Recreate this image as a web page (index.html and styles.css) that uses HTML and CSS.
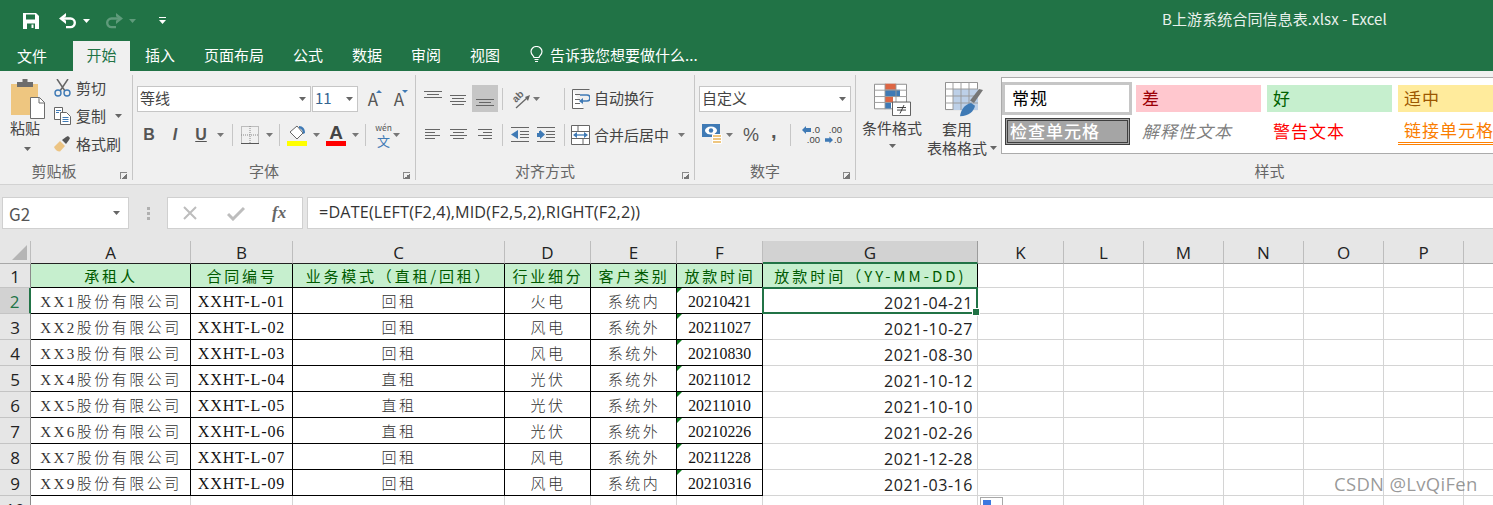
FILE: index.html
```html
<!DOCTYPE html>
<html lang="zh">
<head>
<meta charset="utf-8">
<title>B上游系统合同信息表.xlsx - Excel</title>
<link rel="stylesheet" href="styles.css">
</head>
<body>
<header class="titlebar">
  <div class="qat">
    <svg class="save" width="16" height="16" viewBox="0 0 16 16"><path fill="#fff" d="M0 0h13l3 3v13H0z"/><path fill="#217346" d="M3 1.500h9v5H3zM4 10.500h8V16H4z"/><path fill="#fff" d="M8.500 11.500h2V15h-2z"/></svg>
    <svg class="undo" width="18" height="16" viewBox="0 0 18 16"><path fill="none" stroke="#fff" stroke-width="2.400" d="M3 5.500h8.500a4.300 4.300 0 0 1 0 8.600H7"/><path fill="#fff" d="M7 0v3.200L4.200 5.500 7 7.800V11L0 5.500z"/></svg>
    <svg class="caret-s" width="7" height="4" viewBox="0 0 7 4"><path fill="#fff" d="M0 0h7L3.500 4z"/></svg>
    <svg class="redo" width="18" height="16" viewBox="0 0 18 16"><path fill="none" stroke="#5f9b7b" stroke-width="2.400" d="M15 5.500H6.500a4.300 4.300 0 0 0 0 8.600H11"/><path fill="#5f9b7b" d="M11 0v3.200l2.800 2.300L11 7.800V11l7-5.500z"/></svg>
    <svg class="caret-s2" width="7" height="4" viewBox="0 0 7 4"><path fill="#5f9b7b" d="M0 0h7L3.500 4z"/></svg>
    <svg class="custom" width="7" height="7" viewBox="0 0 7 7"><path fill="#fff" d="M0 0h7v1H0zM0 3h7L3.500 7z"/></svg>
  </div>
  <div class="doc-title">B上游系统合同信息表.xlsx - Excel</div>
</header>
<nav class="tabs">
  <span class="tab t-file">文件</span>
  <span class="tab active">开始</span>
  <span class="tab t-ins">插入</span>
  <span class="tab t-page">页面布局</span>
  <span class="tab t-std">公式</span>
  <span class="tab t-std">数据</span>
  <span class="tab t-std">审阅</span>
  <span class="tab t-std">视图</span>
  <svg class="bulb" width="13" height="17" viewBox="0 0 13 17"><path fill="none" stroke="#fff" stroke-width="1.200" d="M4 11.500C3.500 9.500 1 8.500 1 5.500a5.500 5 0 0 1 11 0c0 3-2.500 4-3 6z"/><path stroke="#fff" stroke-width="1.200" d="M4.500 13.500h4M5 15.500h3"/></svg>
  <span class="tab t-tell">告诉我您想要做什么...</span>
</nav>

<section class="ribbon">
  <div class="group g-clip">
    <div class="clip-body">
      <div class="paste">
        <svg width="34" height="40" viewBox="0 0 34 40"><rect x="0" y="5" width="27" height="31" fill="#eec680"/><path fill="#6d6d6d" d="M6 3h5.500V0h5v3H22v5H6z"/><path fill="#fff" stroke="#6d6d6d" d="M19.500 18.500h9l5 5v16h-14z"/><path fill="none" stroke="#6d6d6d" d="M28 18.500v5.500h5.500"/></svg>
        <span class="paste-t">粘贴</span>
        <svg class="paste-c" width="7" height="4" viewBox="0 0 7 4"><path fill="#666" d="M0 0h7L3.500 4z"/></svg>
      </div>
      <div class="clip-list">
        <div class="clip-item">
          <svg width="17" height="18" viewBox="0 0 17 18"><path stroke="#666" stroke-width="1.500" d="M3 0l8 12M14 0L6 12"/><circle cx="4" cy="14" r="3" fill="none" stroke="#3f7ab5" stroke-width="1.400"/><circle cx="13" cy="14" r="3" fill="none" stroke="#3f7ab5" stroke-width="1.400"/></svg>
          <span>剪切</span>
        </div>
        <div class="clip-item">
          <svg width="17" height="18" viewBox="0 0 17 18"><path fill="#fff" stroke="#666" d="M.5.500h8v12h-8z"/><path fill="#fff" stroke="#666" d="M6.500 5.500h6l4 4v8h-10z"/><path stroke="#3f7ab5" d="M8.500 10.500h6M8.500 12.500h6M8.500 14.500h6M2 3.500h5M2 5.500h3"/></svg>
          <span>复制</span>
          <svg class="clip-c" width="7" height="4" viewBox="0 0 7 4"><path fill="#666" d="M0 0h7L3.500 4z"/></svg>
        </div>
        <div class="clip-item">
          <svg width="17" height="16" viewBox="0 0 17 16"><path fill="#ecc483" d="M0 11l6-6 5 5-5 5.500c-3 0-5-2-6-4.500z"/><path fill="#555" d="M8 4l4-3 2-1 2 2-1 2-3 4z"/></svg>
          <span>格式刷</span>
        </div>
      </div>
    </div>
    <div class="label lb-clip">剪贴板</div>
    <i class="launch"></i>
  </div>

  <div class="group g-font">
    <div class="row r1">
      <div class="field f-name"><span>等线</span><svg width="7" height="4" viewBox="0 0 7 4"><path fill="#666" d="M0 0h7L3.500 4z"/></svg></div>
      <div class="field f-size"><span class="blue">11</span><svg width="7" height="4" viewBox="0 0 7 4"><path fill="#666" d="M0 0h7L3.500 4z"/></svg></div>
      <span class="grow ml8">A<i class="up"></i></span>
      <span class="grow ml12">A<i class="down"></i></span>
    </div>
    <div class="row r2">
      <span class="fmt w-b">B</span><span class="fmt w-i">I</span><span class="fmt w-u">U</span>
      <svg class="cw14" width="7" height="4" viewBox="0 0 7 4"><path fill="#777" d="M0 0h7L3.500 4z"/></svg>
      <i class="sep ml5"></i>
      <svg class="ml8" width="18" height="18" viewBox="0 0 18 18"><path fill="none" stroke="#888" stroke-dasharray="1 1" d="M.5.500h17v17H.500zM9 0v18M0 9h18"/><path stroke="#555" d="M0 17.500h18"/></svg>
      <svg class="cw20" width="7" height="4" viewBox="0 0 7 4"><path fill="#777" d="M0 0h7L3.500 4z"/></svg>
      <i class="sep"></i>
      <svg class="ml7" width="20" height="22" viewBox="0 0 20 22"><path fill="#fff" stroke="#666" d="M3 8l7-6 6 7-6 6z"/><path fill="#3f7ab5" d="M12 2c4 0 6 3 6 7l-2 1c0-3-1-5-4-6z"/><path fill="#ffff00" d="M0 17h20v5H0z"/></svg>
      <svg class="cw18" width="7" height="4" viewBox="0 0 7 4"><path fill="#777" d="M0 0h7L3.500 4z"/></svg>
      <span class="fontcolor ml1">A</span>
      <svg class="cw18" width="7" height="4" viewBox="0 0 7 4"><path fill="#777" d="M0 0h7L3.500 4z"/></svg>
      <i class="sep ml1"></i>
      <span class="wen ml10"><small>wén</small><b>文</b></span>
      <svg class="ml2 cw20" width="7" height="4" viewBox="0 0 7 4"><path fill="#777" d="M0 0h7L3.500 4z"/></svg>
    </div>
    <div class="label lb-std">字体</div>
    <i class="launch"></i>
  </div>

  <div class="group g-align">
    <div class="row r1">
      <svg class="ml8" width="18" height="26" viewBox="0 0 18 26"><path stroke="#666" d="M0 5.500h18M3 8.500h12M0 11.500h18"/></svg>
      <svg class="ml7" width="18" height="26" viewBox="0 0 18 26"><path stroke="#666" d="M1 9.500h16M3 12.500h12M1 15.500h16M3 18.500h12"/></svg>
      <span class="sel ml5"><svg width="18" height="26" viewBox="0 0 18 26"><path stroke="#666" d="M0 14.500h18M3 17.500h12M0 20.500h18"/></svg></span>
      <i class="sep ml4"></i>
      <svg class="ml7" width="20" height="22" viewBox="0 0 20 22"><text class="ab" x="6" y="15" transform="rotate(-45 6 15)">ab</text><path stroke="#666" stroke-width="1.300" d="M6 20L17 10"/><path fill="#666" d="M20 7l-2 6-3-4z"/></svg>
      <svg class="ml2" width="10" height="4" viewBox="0 0 10 4"><path fill="#777" d="M1 0h7L4.500 4z"/></svg>
      <i class="sep ml22"></i>
      <svg class="ml7" width="18" height="22" viewBox="0 0 18 22"><path fill="#fff" stroke="#666" d="M.5 1.500h17M.5 1.500v19h11M3 11.500h5M3 15.500h5M3 6.500h5"/><path fill="none" stroke="#3f7ab5" stroke-width="1.600" d="M8 7h7a2.500 2.500 0 0 1 0 6h-5"/><path fill="#3f7ab5" d="M11 10v6l-4-3z"/></svg>
      <span class="rtxt ml4">自动换行</span>
    </div>
    <div class="row r2">
      <svg class="ml9" width="15" height="14" viewBox="0 0 15 14"><path stroke="#666" d="M0 1.500h15M0 4.500h10M0 7.500h15M0 10.500h10"/></svg>
      <svg class="ml10" width="17" height="14" viewBox="0 0 17 14"><path stroke="#666" d="M0 1.500h17M3 4.500h11M0 7.500h17M3 10.500h11"/></svg>
      <svg class="ml11" width="14" height="14" viewBox="0 0 14 14"><path stroke="#666" d="M0 1.500h14M5 4.500h9M0 7.500h14M5 10.500h9"/></svg>
      <i class="sep ml10"></i>
      <svg class="ml8" width="18" height="18" viewBox="0 0 18 18"><path stroke="#666" d="M0 1.500h18M9 5.500h9M9 8.500h9M9 11.500h9M0 15.500h18"/><path fill="#3f7ab5" d="M7 4v9L0 8.500z"/></svg>
      <svg class="ml8" width="18" height="18" viewBox="0 0 18 18"><path stroke="#666" d="M0 1.500h18M9 5.500h9M9 8.500h9M9 11.500h9M0 15.500h18"/><path fill="#3f7ab5" d="M0 7h2V5h1V4l5 4.500L3 13v-2H0z"/></svg>
      <i class="sep ml9"></i>
      <svg class="ml6" width="19" height="20" viewBox="0 0 19 20"><path fill="#fff" stroke="#666" d="M.5.500h18v19H.500zM0 6.500h19M0 13.500h19M7 0v6M12 14v6"/><path stroke="#3f7ab5" stroke-width="1.300" d="M4 10h11"/><path fill="#3f7ab5" d="M6 7v6l-4-3zM13 7v6l4-3z"/></svg>
      <span class="rtxt ml4">合并后居中</span>
      <svg class="ml8" width="10" height="4" viewBox="0 0 10 4"><path fill="#777" d="M1 0h7L4.500 4z"/></svg>
    </div>
    <div class="label lb-std">对齐方式</div>
    <i class="launch"></i>
  </div>

  <div class="group g-num">
    <div class="row r1">
      <div class="field f-fmt ml4"><span>自定义</span><svg width="7" height="4" viewBox="0 0 7 4"><path fill="#666" d="M0 0h7L3.500 4z"/></svg></div>
    </div>
    <div class="row r2">
      <svg class="ml7" width="20" height="22" viewBox="0 0 20 22"><path fill="#3f7ab5" d="M0 0h18v13H0z"/><ellipse cx="9" cy="6.500" rx="6" ry="4" fill="#fff"/><circle cx="9" cy="6.500" r="2.200" fill="#3f7ab5"/><path fill="#eec680" stroke="#fff" d="M10.500 10.500h9v3h-9zM10.500 13.500h9v3h-9zM10.500 16.500h9v3h-9z"/></svg>
      <svg class="ml3" width="10" height="4" viewBox="0 0 10 4"><path fill="#777" d="M1 0h7L4.500 4z"/></svg>
      <span class="pct ml8">%</span>
      <span class="comma">,</span>
      <i class="sep sep-n"></i>
      <span class="dec ml7"><i><svg width="9" height="8" viewBox="0 0 9 8"><path fill="#3f7ab5" d="M4 0v2h5v4H4v2L0 4z"/></svg>.0</i><i>.00</i></span>
      <span class="dec ml8 dec2"><i>.00</i><i><svg width="8" height="8" viewBox="0 0 9 8"><path fill="#3f7ab5" d="M5 0v2H0v4h5v2l4-4z"/></svg>.0</i></span>
    </div>
    <div class="label lb-std">数字</div>
    <i class="launch"></i>
  </div>

  <div class="group g-style">
    <div class="style-body">
      <div class="bigbtn">
        <svg width="37" height="33" viewBox="0 0 37 39" preserveAspectRatio="none"><path fill="#fff" stroke="#888" d="M.5 1.500h32v29H.500z"/><path fill="#dd6644" d="M11 1h11v7H11zM11 16h8v7H11z"/><path fill="#3f7ab5" d="M11 8h15v8H11zM11 23h6v7H11z"/><path stroke="#999" d="M11 1v30M22 1v30M0 8.500h33M0 16h33M0 23h33"/><path fill="#fff" stroke="#555" d="M18.500 22.500h18v16h-18z"/><path stroke="#333" d="M23 29h9M23 32h9M30 26l-4 10"/></svg>
        <span>条件格式</span>
        <svg class="big-c" width="7" height="4" viewBox="0 0 7 4"><path fill="#666" d="M0 0h7L3.500 4z"/></svg>
      </div>
      <div class="bigbtn b2">
        <svg width="38" height="35" viewBox="0 0 38 40" preserveAspectRatio="none"><path fill="#fff" stroke="#888" d="M.5 .5h32v31H.500z"/><path fill="#bdd0e8" d="M8 8h25v24H8z"/><path stroke="#999" d="M8 0v32M16 0v32M24 0v32M0 8h33M0 16h33M0 24h33"/><path fill="#777" d="M38 9l-9 15-4-3 9-13z"/><path fill="#3f7ab5" d="M15 39c1-7 4-13 11-15l4 3c-1 6-6 12-15 12z"/></svg>
        <span>套用</span>
        <span class="tbl">表格格式<svg width="7" height="4" viewBox="0 0 7 4"><path fill="#666" d="M0 0h7L3.500 4z"/></svg></span>
      </div>
      <div class="gallery">
        <span class="st st-normal">常规</span>
        <span class="st st-bad">差</span>
        <span class="st st-good">好</span>
        <span class="st st-mid">适中</span>
        <span class="st st-check">检查单元格</span>
        <span class="st st-note">解释性文本</span>
        <span class="st st-warn">警告文本</span>
        <span class="st st-link">链接单元格</span>
      </div>
    </div>
    <div class="label lb-style">样式</div>
  </div>
</section>

<section class="fbar">
  <div class="namebox"><span>G2</span><svg width="7" height="4" viewBox="0 0 7 4"><path fill="#666" d="M0 0h7L3.500 4z"/></svg></div>
  <div class="dots"><i></i><i></i><i></i></div>
  <div class="fbtns">
    <svg width="16" height="16" viewBox="0 0 16 16"><path stroke="#bdbdbd" stroke-width="2" d="M2 2l12 12M14 2L2 14"/></svg>
    <svg class="chk" width="18" height="15" viewBox="0 0 18 15"><path fill="none" stroke="#bdbdbd" stroke-width="3" d="M1 8l5 5L17 2"/></svg>
    <span class="fx">fx</span>
  </div>
  <div class="formula">=DATE(LEFT(F2,4),MID(F2,5,2),RIGHT(F2,2))</div>
</section>

<main class="sheet">
  <div class="ch corner"><svg width="15" height="15" viewBox="0 0 15 15"><path fill="#b5b5b5" d="M15 0v15H0z"/></svg></div>
  <div class="ch dk">A</div><div class="ch dk">B</div><div class="ch dk">C</div><div class="ch dk">D</div><div class="ch dk">E</div><div class="ch dk">F</div><div class="ch sel-ch">G</div><div class="ch">K</div><div class="ch">L</div><div class="ch">M</div><div class="ch">N</div><div class="ch">O</div><div class="ch">P</div><div class="ch"></div>

  <div class="rh">1</div>
  <div class="c hd">承租人</div><div class="c hd">合同编号</div><div class="c hd">业务模式（直租/回租）</div><div class="c hd">行业细分</div><div class="c hd">客户类别</div><div class="c hd">放款时间</div><div class="c hd hd-g">放款时间（YY-MM-DD)</div><i class="g"></i><i class="g"></i><i class="g"></i><i class="g"></i><i class="g"></i><i class="g"></i><i class="g"></i>

  <div class="rh rh-sel">2</div>
  <div class="c">XX1股份有限公司</div><div class="c code">XXHT-L-01</div><div class="c">回租</div><div class="c">火电</div><div class="c">系统内</div><div class="c num tri">20210421</div><div class="d active-cell">2021-04-21</div><i class="g"></i><i class="g"></i><i class="g"></i><i class="g"></i><i class="g"></i><i class="g"></i><i class="g"></i>

  <div class="rh">3</div>
  <div class="c">XX2股份有限公司</div><div class="c code">XXHT-L-02</div><div class="c">回租</div><div class="c">风电</div><div class="c">系统外</div><div class="c num tri">20211027</div><div class="d">2021-10-27</div><i class="g"></i><i class="g"></i><i class="g"></i><i class="g"></i><i class="g"></i><i class="g"></i><i class="g"></i>

  <div class="rh">4</div>
  <div class="c">XX3股份有限公司</div><div class="c code">XXHT-L-03</div><div class="c">回租</div><div class="c">风电</div><div class="c">系统外</div><div class="c num tri">20210830</div><div class="d">2021-08-30</div><i class="g"></i><i class="g"></i><i class="g"></i><i class="g"></i><i class="g"></i><i class="g"></i><i class="g"></i>

  <div class="rh">5</div>
  <div class="c">XX4股份有限公司</div><div class="c code">XXHT-L-04</div><div class="c">直租</div><div class="c">光伏</div><div class="c">系统外</div><div class="c num tri">20211012</div><div class="d">2021-10-12</div><i class="g"></i><i class="g"></i><i class="g"></i><i class="g"></i><i class="g"></i><i class="g"></i><i class="g"></i>

  <div class="rh">6</div>
  <div class="c">XX5股份有限公司</div><div class="c code">XXHT-L-05</div><div class="c">直租</div><div class="c">光伏</div><div class="c">系统外</div><div class="c num tri">20211010</div><div class="d">2021-10-10</div><i class="g"></i><i class="g"></i><i class="g"></i><i class="g"></i><i class="g"></i><i class="g"></i><i class="g"></i>

  <div class="rh">7</div>
  <div class="c">XX6股份有限公司</div><div class="c code">XXHT-L-06</div><div class="c">直租</div><div class="c">光伏</div><div class="c">系统外</div><div class="c num tri">20210226</div><div class="d">2021-02-26</div><i class="g"></i><i class="g"></i><i class="g"></i><i class="g"></i><i class="g"></i><i class="g"></i><i class="g"></i>

  <div class="rh">8</div>
  <div class="c">XX7股份有限公司</div><div class="c code">XXHT-L-07</div><div class="c">回租</div><div class="c">风电</div><div class="c">系统外</div><div class="c num tri">20211228</div><div class="d">2021-12-28</div><i class="g"></i><i class="g"></i><i class="g"></i><i class="g"></i><i class="g"></i><i class="g"></i><i class="g"></i>

  <div class="rh">9</div>
  <div class="c">XX9股份有限公司</div><div class="c code">XXHT-L-09</div><div class="c">回租</div><div class="c">风电</div><div class="c">系统内</div><div class="c num tri">20210316</div><div class="d">2021-03-16</div><i class="g"></i><i class="g"></i><i class="g"></i><i class="g"></i><i class="g"></i><i class="g"></i><i class="g"></i>

  <div class="rh">10</div>
  <i class="g"></i><i class="g"></i><i class="g"></i><i class="g"></i><i class="g"></i><i class="g"></i><i class="g"></i><i class="g qa-host"><span class="qa"><b></b></span></i><i class="g"></i><i class="g"></i><i class="g"></i><i class="g"></i><i class="g"></i><i class="g"></i>
</main>
<div class="watermark">CSDN @LvQiFen</div>
</body>
</html>
```

FILE: styles.css
```css
* { box-sizing: border-box; }
html, body { margin: 0; height: 505px; overflow: hidden; }
body {
  position: relative;
  width: 1493px;
  background: #e6e6e6;
  font-family: "Noto Sans CJK SC", "Noto Sans", sans-serif;
  font-size: 15px;
  color: #444;
}
svg { display: block; flex: none; }
i, small, b { font-style: normal; font-weight: normal; }

/* title */
.titlebar { height: 41px; background: #217346; display: flex; align-items: center; color: #e9f1ec; }
.qat { width: 1162px; display: flex; align-items: center; padding-left: 23px; height: 38px; }
.undo { margin-left: 20px; }
.caret-s { margin-left: 6px; }
.redo { margin-left: 15px; }
.caret-s2 { margin-left: 6px; }
.custom { margin-left: 23px; }
.doc-title { font-size: 15px; letter-spacing: .1px; margin-top: -4px; white-space: nowrap; }

/* tabs */
.tabs { height: 30px; background: #217346; display: flex; align-items: stretch; color: #fff; }
.tab { line-height: 27px; white-space: nowrap; }
.tab.active { width: 57px; margin-left: 26px; background: #f0f0f0; color: #217346; text-align: center; }
.t-file { margin-left: 17px; line-height: 29px; }
.t-ins { margin-left: 15px; }
.t-page { margin-left: 29px; }
.t-std { margin-left: 29px; }
.bulb { margin: 5px 0 0 30px; }
.t-tell { margin-left: 7px; font-size: 15px; }

/* ribbon */
.ribbon { height: 114px; background: #f0f0f0; border-bottom: 1px solid #d2d2d2; display: flex; }
.group { position: relative; margin: 4px 0; border-right: 1px solid #c6c6c6; display: flex; flex-direction: column; height: 105px; flex: none; }
.g-clip { width: 133px; }
.g-font { width: 283px; padding-left: 4px; }
.g-font .label { margin-left: -4px; }
.g-align { width: 279px; }
.g-num { width: 161px; }
.g-style { width: 637px; border-right: 0; }
.label { margin-top: auto; height: 16px; line-height: 14px; text-align: center; font-size: 15px; color: #666; }
.lb-clip { padding-right: 24px; }
.lb-std { padding-right: 20px; }
.lb-style { padding-left: 190px; }
.launch { position: absolute; right: 5px; bottom: 1px; width: 7px; height: 7px; border-left: 1px solid #888; border-top: 1px solid #888; background: linear-gradient(135deg, transparent 50%, #777 50%); }

.clip-body { display: flex; padding-top: 4px; }
.paste { width: 50px; padding-left: 11px; display: flex; flex-direction: column; }
.paste-t { margin: -3px 0 0 -1px; line-height: 24px; }
.paste-c { margin: 7px 0 0 13px; }
.clip-list { margin-left: 4px; display: flex; flex-direction: column; gap: 10px; }
.clip-item { height: 18px; display: flex; align-items: center; }
.clip-item span { margin-left: 5px; padding-bottom: 2px; }
.clip-c { margin-left: 9px; }

.row { display: flex; align-items: center; }
.r1 { height: 27px; margin-top: 10px; }
.r2 { height: 26px; margin-top: 10px; }
.field { background: #fff; border: 1px solid #c6c6c6; height: 26px; display: flex; align-items: center; justify-content: space-between; padding: 0 4px 0 2px; }
.field span { padding-bottom: 2px; }
.f-name { width: 174px; margin-right: 1px; }
.f-size { width: 46px; }
.f-fmt { width: 152px; }
.blue { color: #35648f; }
.grow { position: relative; font-size: 17px; color: #555; width: 14px; text-align: center; }
.grow .up, .grow .down { position: absolute; right: -2px; top: 4px; border: 3px solid transparent; }
.grow .up { border-bottom-color: #3f7ab5; border-top: 0; }
.grow .down { border-top-color: #3f7ab5; border-bottom: 0; }
.fmt { font-family: "Liberation Sans", sans-serif; font-size: 16px; text-align: center; color: #555; font-weight: bold; }
.w-b { width: 24px; }
.w-i { width: 28px; font-style: italic; }
.w-u { width: 24px; text-decoration: underline; }
.cw14 { margin: 0 3px 0 4px; }
.cw18 { margin: 0 5px 0 6px; }
.cw20 { margin: 0 6px 0 7px; }
.sep { width: 1px; height: 22px; background: #c6c6c6; flex: none; }
.ml1 { margin-left: 1px; } .ml2 { margin-left: 2px; } .ml3 { margin-left: 3px; } .ml4 { margin-left: 4px; }
.ml5 { margin-left: 5px; } .ml6 { margin-left: 6px; } .ml7 { margin-left: 7px; } .ml8 { margin-left: 8px; }
.ml9 { margin-left: 9px; } .ml10 { margin-left: 10px; } .ml11 { margin-left: 11px; } .ml12 { margin-left: 12px; }
.ml22 { margin-left: 22px; }
.fontcolor { width: 20px; height: 22px; line-height: 17px; text-align: center; font-size: 19px; color: #444; border-bottom: 5px solid #ff0000; font-family: "Liberation Sans", sans-serif; font-weight: bold; }
.wen { width: 15px; display: flex; flex-direction: column; align-items: center; line-height: 1; }
.wen small { font-size: 8.500px; color: #555; line-height: 11px; }
.wen b { font-size: 13px; color: #3f7ab5; line-height: 15px; }
.sel { width: 26px; height: 27px; background: #c6c6c6; display: flex; justify-content: center; flex: none; }
.ab { font-family: "Liberation Sans", sans-serif; font-size: 10px; font-weight: bold; fill: #666; }
.rtxt { white-space: nowrap; padding-bottom: 2px; }
.pct { font-size: 18px; color: #555; width: 15px; text-align: center; font-family: "Liberation Sans", sans-serif; }
.comma { width: 8px; margin-left: 13px; margin-bottom: 8px; font-family: "Liberation Sans", sans-serif; font-size: 20px; font-weight: bold; color: #555; line-height: 18px; }
.sep-n { margin-left: 11px; }
.dec { display: flex; flex-direction: column; font-family: "Liberation Sans", sans-serif; font-size: 9.500px; line-height: 10px; color: #444; width: 22px; }
.dec i { display: flex; align-items: center; justify-content: flex-end; gap: 1px; }
.dec2 { width: 14px; }

.style-body { display: flex; }
.bigbtn { width: 60px; margin-left: 6px; display: flex; flex-direction: column; align-items: center; padding-top: 8px; }
.bigbtn span { line-height: 20px; white-space: nowrap; }
.bigbtn > span { margin-top: 2px; }
.bigbtn.b2 { margin-left: 5px; padding-top: 7px; }
.b2 > svg { margin-left: 14px; }
.big-c { margin-top: 6px; }
.b2 .tbl { margin: -1px -10px 0 0; display: flex; align-items: center; gap: 3px; }
.gallery { margin: 2px 0 0 14px; width: 492px; height: 77px; background: #fff; border: 1px solid #ababab; border-right: 0; display: grid; grid-template-columns: 128px 125px 125px 125px; column-gap: 6px; grid-template-rows: 33px 27px; row-gap: 3px; padding-top: 4px; overflow: hidden; }
.st { font-size: 17px; letter-spacing: 1px; line-height: 25px; padding-left: 6px; white-space: nowrap; }
.st-normal { border: 3px solid #c6c6c6; color: #000; padding-left: 7px; margin-right: -2px; }
.st-bad, .st-good, .st-mid { margin: 3px 0; }
.st-bad { background: #ffc7ce; color: #9c0006; }
.st-good { background: #c6efce; color: #006100; }
.st-mid { background: #ffeb9c; color: #9c5700; }
.st-check { margin: 0 0 0 3px; background: #a5a5a5; color: #fff; border: 3px double #3f3f3f; padding-left: 2px; line-height: 20px; font-weight: 500; }
.st-note { color: #7f7f7f; font-style: italic; }
.st-warn { color: #ff0000; }
.st-link { color: #fa7d00; border-bottom: 3px double #ff8001; line-height: 23px; }

/* formula bar */
.fbar { height: 56px; padding: 12px 0 0 2px; display: flex; align-items: flex-start; }
.namebox { width: 127px; height: 32px; background: #fff; border: 1px solid #d0d0d0; display: flex; align-items: center; justify-content: space-between; padding: 0 8px 0 6px; font-size: 17px; color: #555; }
.dots { width: 38px; height: 32px; display: flex; flex-direction: column; align-items: center; justify-content: center; gap: 2px; }
.dots i { width: 3px; height: 3px; background: #b0b0b0; }
.fbtns { width: 136px; height: 32px; background: #fff; border: 1px solid #d0d0d0; display: flex; align-items: center; padding-left: 14px; }
.chk { margin-left: 29px; }
.fx { margin-left: 27px; font-family: "Liberation Serif", serif; font-style: italic; font-weight: bold; font-size: 17px; color: #666; }
.formula { margin-left: 4px; flex: 1; height: 32px; background: #fff; border: 1px solid #d0d0d0; border-right: 0; padding-left: 11px; line-height: 29px; font-size: 16.200px; letter-spacing: .15px; color: #333; font-family: "Open Sans", sans-serif; white-space: nowrap; }

/* sheet */
.sheet { display: grid; grid-template-columns: 31px 160px 102px 212px 86px 86px 86px 215px 86px 80px 80px 80px 80px 80px 30px; grid-template-rows: 23px 24px repeat(9, 26px); background: #fff; }
.ch, .rh { background: #e6e6e6; display: flex; align-items: center; justify-content: center; color: #222; font-size: 17px; font-family: "Open Sans", sans-serif; border-right: 1px solid #bdbdbd; border-bottom: 1px solid #a8a8a8; }
.ch { padding-top: 1px; }
.ch.dk { border-bottom-color: #222; }
.corner { justify-content: flex-end; padding: 0 3px 0 0; }
.sel-ch { background: #d2d2d2; border-bottom: 2px solid #217346; border-right-color: #9c9c9c; }
.rh { border-right-color: #8a8a8a; border-bottom-color: #c4c4c4; padding-top: 2px; }
.rh-sel { background: #d2d2d2; border-right: 2px solid #217346; color: #217346; }
.c, .d { position: relative; background: #fff; white-space: nowrap; }
.c { border-right: 1px solid #000; border-bottom: 1px solid #000; display: flex; align-items: center; justify-content: center; padding-left: 1px; font-family: "Liberation Serif", "Noto Sans CJK SC", serif; font-size: 15px; letter-spacing: 2.500px; color: #333; font-weight: 300; }
.hd { background: #c6efce; color: #005a00; font-family: "Noto Sans CJK SC", sans-serif; font-weight: 400; letter-spacing: 2.800px; }
.hd-g { letter-spacing: 3px; }
.code { font-size: 16px; letter-spacing: .9px; padding-top: 3px; padding-left: 0; color: #111; font-weight: 400; }
.num { font-size: 15.800px; letter-spacing: 0; padding-top: 2px; padding-left: 0; color: #111; font-weight: 400; }
.tri::before { content: ""; position: absolute; left: 0; top: 0; border-style: solid; border-width: 5px 5px 0 0; border-color: #0a7a1c transparent transparent transparent; }
.d { border-right: 1px solid #d4d4d4; border-bottom: 1px solid #d4d4d4; text-align: right; padding-right: 4px; font-family: "Open Sans", sans-serif; font-size: 16px; letter-spacing: .55px; line-height: 31px; color: #222; }
.active-cell::after { content: ""; position: absolute; left: -1px; top: -1px; right: -1px; bottom: -1px; border: 2px solid #217346; }
.active-cell::before { content: ""; position: absolute; right: -3px; bottom: -3px; width: 6px; height: 6px; background: #217346; border: 1px solid #fff; z-index: 1; }
.g { display: block; border-right: 1px solid #d4d4d4; border-bottom: 1px solid #d4d4d4; }
.qa-host { position: relative; }
.qa { position: absolute; left: 2px; top: 1px; width: 23px; height: 18px; border: 1px solid #a8a8a8; background: #fff; padding: 2px; }
.qa b { display: block; width: 8px; height: 7px; background: #3c78e0; }
.watermark { position: absolute; left: 1334px; top: 471px; font-family: "Open Sans", sans-serif; font-size: 18.500px; color: rgba(120, 120, 120, .75); letter-spacing: .3px; }
```
